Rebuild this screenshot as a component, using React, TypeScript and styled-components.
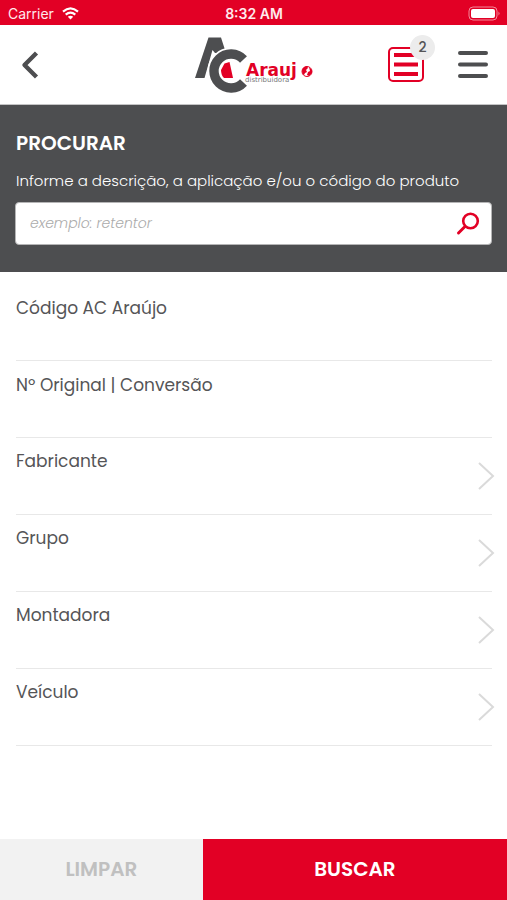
import React from 'react';
import styled, { createGlobalStyle } from 'styled-components';

const red = '#e20025';
const charcoal = '#4d4e50';

const GlobalStyle = createGlobalStyle`
  *, *::before, *::after { box-sizing: border-box; }
  body { margin: 0; background: #fff; }
  body, button, input { font-family: Poppins, Inter, "Open Sans", sans-serif; }
  button { border: 0; padding: 0; background: none; color: inherit; cursor: pointer; }
`;

const Screen = styled.div`
  display: flex;
  flex-direction: column;
  min-height: 100vh;
  color: #555557;
`;

const StatusBar = styled.div`
  display: grid;
  grid-template-columns: 1fr auto 1fr;
  align-items: center;
  height: 25px;
  padding: 2px 7px 0 8px;
  background: ${red};
  color: #ffe9ec;
  font-family: Inter, sans-serif;
  font-size: 14px;
  line-height: 20px;
`;

const Carrier = styled.span`
  display: flex;
  align-items: center;
  gap: 8px;
`;

const Clock = styled.span`
  font-weight: 600;
`;

const BatteryIcon = styled.svg`
  justify-self: end;
`;

const Header = styled.header`
  display: grid;
  grid-template-columns: 1fr auto 1fr;
  align-items: center;
  height: 80px;
  padding: 0 18px 0 16px;
  border-bottom: 1px solid #c4c4c5;
`;

const IconButton = styled.button`
  display: flex;
  align-items: center;
  justify-content: center;
`;

const BackButton = styled(IconButton)`
  justify-self: start;
  width: 28px;
  height: 40px;
`;

const HeaderActions = styled.div`
  display: flex;
  align-items: center;
  justify-content: flex-end;
  gap: 33px;
`;

const ListButton = styled(IconButton)`
  position: relative;
  width: 36px;
  height: 36px;
`;

const Badge = styled.span`
  position: absolute;
  top: -12px;
  right: -11px;
  width: 25px;
  height: 25px;
  border-radius: 50%;
  background: #ececec;
  color: #555557;
  font-size: 14px;
  font-weight: 500;
  line-height: 25px;
  text-align: center;
`;

const SearchPanel = styled.form`
  display: flex;
  flex-direction: column;
  padding: 26px 15px 27px;
  background: ${charcoal};
  color: #fff;
`;

const Title = styled.h1`
  margin: 0 1px 14px;
  font-size: 20px;
  font-weight: 600;
  line-height: 24px;
`;

const Hint = styled.label`
  margin: 0 1px 9px;
  color: #fff;
  font-size: 15px;
  font-weight: 300;
  line-height: 24px;
`;

const SearchField = styled.div`
  display: flex;
  align-items: center;
  height: 43px;
  padding: 0 11px 0 14px;
  border: 1px solid #b5b5b6;
  border-radius: 4px;
  background: #fff;
`;

const SearchInput = styled.input`
  flex: 1;
  min-width: 0;
  height: 40px;
  padding: 0 0 1px;
  border: 0;
  outline: 0;
  background: transparent;
  color: ${charcoal};
  font-size: 14px;
  font-weight: 300;
  &::placeholder { color: #ababab; font-style: italic; opacity: 1; }
`;

const Filters = styled.main`
  flex: 1;
  display: flex;
  flex-direction: column;
  padding: 12px 15px 0 16px;
`;

const Field = styled.div`
  display: flex;
  flex-direction: column;
  height: 77px;
  padding-top: 12px;
  border-bottom: 1px solid #e8e8e8;
  font-size: 17px;
  line-height: 24px;
`;

const FieldInput = styled.input`
  height: 32px;
  padding: 0;
  border: 0;
  outline: 0;
  background: transparent;
  color: inherit;
  font-size: 16px;
`;

const Picker = styled.button`
  display: flex;
  justify-content: space-between;
  align-items: center;
  height: 77px;
  border-bottom: 1px solid #e8e8e8;
  font-size: 17px;
  line-height: 24px;
  text-align: left;
`;

const PickerLabel = styled.span`
  align-self: flex-start;
  padding-top: 11px;
`;

const Chevron = styled.svg`
  overflow: visible;
`;

const Footer = styled.footer`
  display: grid;
  grid-template-columns: 2fr 3fr;
  height: 61px;
`;

const FooterButton = styled.button<{ $primary?: boolean }>`
  padding-bottom: 2px;
  background: ${(p) => (p.$primary ? red : '#f2f2f2')};
  color: ${(p) => (p.$primary ? '#fff' : '#c0c0c0')};
  font-size: 20px;
  font-weight: 600;
  line-height: 24px;
`;

function Logo() {
  return (
    <svg width="120" height="60" viewBox="0 0 120 60" role="img" aria-label="AC Araujo distribuidora">
      <path d="M2 43L15.500 2.500H28L33 18H22l-2.500-3-8 28z" fill={charcoal} />
      <path d="M50.500 24.500a17 17 0 1 0 0 23" fill="none" stroke="#fff" strokeWidth="13" />
      <circle cx="38.500" cy="36" r="16" fill="#fff" />
      <path d="M50.500 24.500a17 17 0 1 0 0 23" fill="none" stroke={charcoal} strokeWidth="9.400" />
      <path d="M28 35l3.500-6.500 5-1.500L40 43h-9q-3-3-3-8z" fill={red} />
      <text x="53" y="41" fill={red} fontFamily="DejaVu Sans, sans-serif" fontSize="17" fontWeight="700">Arauj</text>
      <circle cx="114" cy="36.500" r="5" fill="#fff" stroke={red} strokeWidth="1" />
      <path d="M109 36q0-4 5-5l1 2-2 2 1 2-2 1-1 2q-2-1-2-4zM116 32l3 3v3l-3 3-2-1 1-3 2-1z" fill={red} />
      <text x="52" y="47" fill="#77777a" fontFamily="DejaVu Sans, sans-serif" fontSize="7">distribuidora</text>
    </svg>
  );
}

const textFields = [
  { id: 'codigo', label: 'Código AC Araújo' },
  { id: 'original', label: 'Nº Original | Conversão' },
];

const pickers = ['Fabricante', 'Grupo', 'Montadora', 'Veículo'];

export default function App() {
  return (
    <Screen>
      <GlobalStyle />
      <StatusBar>
        <Carrier>
          Carrier
          <svg width="17" height="13" viewBox="0 0 17 13" aria-hidden="true">
            <g fill="none" stroke="#fff" strokeWidth="2.200">
              <path d="M1 4.600q7.500-6.400 15 0" />
              <path d="M3.700 7.700q4.800-4 9.600 0" />
            </g>
            <path d="M5.800 9.700q2.700-2 5.400 0L8.500 12.500z" fill="#fff" />
          </svg>
        </Carrier>
        <Clock>8:32 AM</Clock>
        <BatteryIcon width="32" height="15" viewBox="0 0 32 15" aria-hidden="true">
          <rect x="1" y="1" width="28" height="13" rx="4" fill="none" stroke="#f3899a" />
          <rect x="3" y="3" width="24" height="9" rx="2" fill="#fff" />
          <path d="M30.500 5.500q2 2 0 4z" fill="#f3899a" />
        </BatteryIcon>
      </StatusBar>

      <Header>
        <BackButton type="button" aria-label="Voltar">
          <svg width="28" height="40" viewBox="0 0 28 40" fill="none" stroke={charcoal} strokeWidth="4.400">
            <path d="M20.500 8L8.500 20l12 12" strokeLinejoin="round" />
          </svg>
        </BackButton>
        <Logo />
        <HeaderActions>
          <ListButton type="button" aria-label="Lista, 2 itens">
            <svg width="36" height="36" viewBox="0 0 36 36" fill="none" stroke={red}>
              <rect x="1" y="1" width="34" height="33" rx="4" strokeWidth="2" />
              <path d="M6 8h24M6 17.500h24M6 27h24" strokeWidth="4" />
            </svg>
            <Badge>2</Badge>
          </ListButton>
          <IconButton type="button" aria-label="Menu">
            <svg width="32" height="32" viewBox="0 0 32 32" fill="none" stroke={charcoal} strokeWidth="4" strokeLinecap="round">
              <path d="M3 4h26M3 15.500h26M3 27h26" />
            </svg>
          </IconButton>
        </HeaderActions>
      </Header>

      <SearchPanel onSubmit={(e) => e.preventDefault()}>
        <Title>PROCURAR</Title>
        <Hint htmlFor="busca">Informe a descrição, a aplicação e/ou o código do produto</Hint>
        <SearchField>
          <SearchInput id="busca" placeholder="exemplo: retentor" />
          <IconButton type="submit" aria-label="Pesquisar">
            <svg width="24" height="24" viewBox="0 0 24 24" fill="none" stroke={red} strokeWidth="2.600" strokeLinecap="round">
              <circle cx="14.500" cy="9" r="7.300" />
              <path d="M9 14.500L2.500 21" strokeWidth="3" />
            </svg>
          </IconButton>
        </SearchField>
      </SearchPanel>

      <Filters>
        {textFields.map((f) => (
          <Field key={f.id}>
            <label htmlFor={f.id}>{f.label}</label>
            <FieldInput id={f.id} />
          </Field>
        ))}
        {pickers.map((name) => (
          <Picker key={name} type="button">
            <PickerLabel>{name}</PickerLabel>
            <Chevron width="15" height="28" viewBox="0 0 15 28" fill="none" stroke="#dadada" strokeWidth="2" aria-hidden="true">
              <path d="M2 1l14 13L2 27" />
            </Chevron>
          </Picker>
        ))}
      </Filters>

      <Footer>
        <FooterButton type="button">LIMPAR</FooterButton>
        <FooterButton type="button" $primary>BUSCAR</FooterButton>
      </Footer>
    </Screen>
  );
}
